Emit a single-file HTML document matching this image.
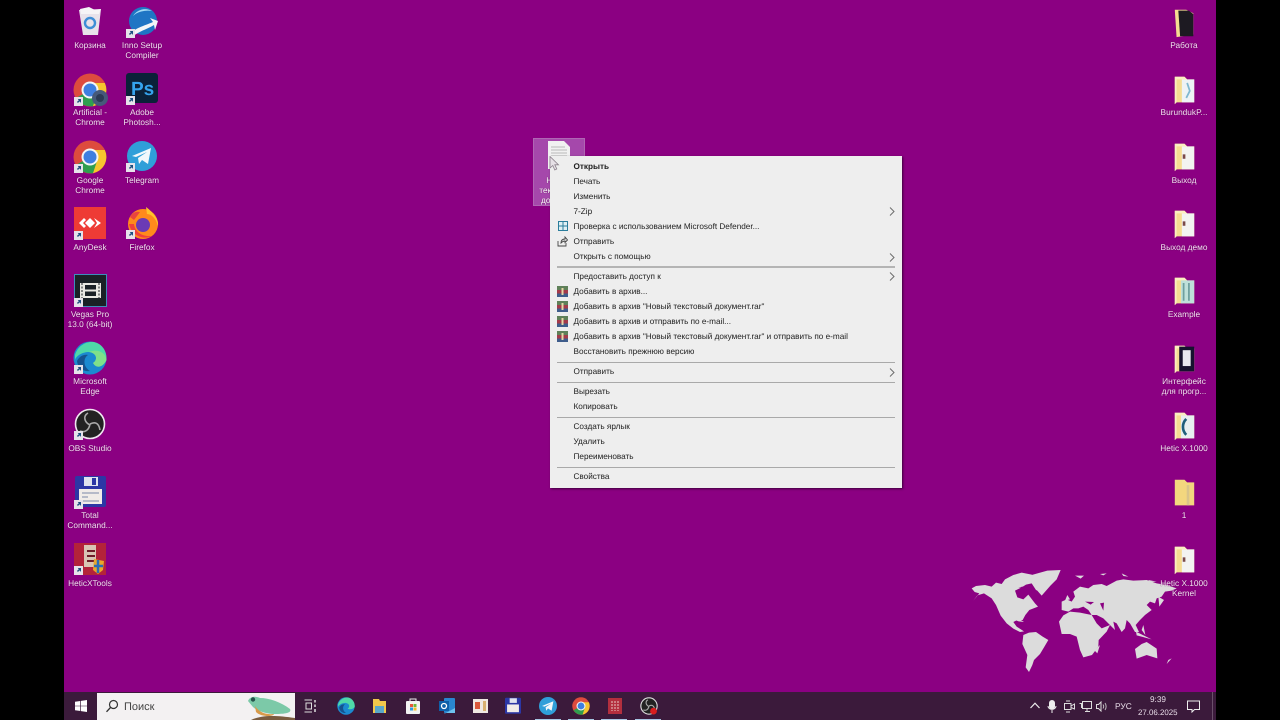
<!DOCTYPE html>
<html lang="ru"><head><meta charset="utf-8"><title>Desktop</title>
<style>
html{background:#000}
html,body{margin:0;padding:0;width:1280px;height:720px;overflow:hidden}
body{font-family:"Liberation Sans","Noto Sans CJK JP",sans-serif;position:relative;background:#000;filter:blur(.3px);text-rendering:geometricPrecision}
#desk{position:absolute;left:64px;top:0;width:1152px;height:720px;background:#8b0082}
.l{position:absolute;width:76px;text-align:center;color:#f6def4;font-size:8.3px;line-height:10px;transform:translateX(-38px);text-shadow:0 0 1px #50004a}
.ic{position:absolute;width:34px;height:34px}
.sc{position:absolute;width:9px;height:9px;background:#e6e2ea;overflow:hidden}
.sc:after{content:"";position:absolute;left:3px;top:2px;width:4px;height:4px;background:#1c4f80;clip-path:polygon(20% 0,100% 0,100% 100%,70% 60%,20% 100%,0 70%,45% 35%)}
#sel{position:absolute;left:533px;top:138px;width:52px;height:68px;background:#a548ab;box-sizing:border-box;border:1px solid #b066b4}
#menu{position:absolute;left:550px;top:156px;width:352px;height:332px;background:#eeeeee;box-shadow:1px 1px 2px rgba(30,0,30,.7);color:#222;font-size:8.2px}
.m{position:absolute;left:23.5px;line-height:12px;white-space:nowrap}
.s{position:absolute;left:7px;width:338px;height:1px;background:#a9a9a9}
.a{position:absolute;left:339px;width:6px;height:9px}
.w{position:absolute;left:7px;width:11px;height:11px}
#tb{position:absolute;left:64px;top:692px;width:1152px;height:28px;background:#3b1a3b}
#sb{position:absolute;left:97px;top:693px;width:198px;height:27px;background:#f3f1f2}
.t{position:absolute;color:#e9dde9;white-space:nowrap}
.u{position:absolute;top:718.5px;height:1.5px;background:#a8c8e4;width:26px}
</style></head><body>
<div id="desk"></div>
<svg width="0" height="0" style="position:absolute"><defs>
<symbol id="chrome" viewBox="0 0 34 34"><circle cx="17" cy="17" r="16.5" fill="#dd4b3e"/><path d="M3 25A16.5 16.5 0 0 0 20 33.200L26 22 17 17Z" fill="#2f9e4f"/><path d="M17 10H31.800A16.500 16.500 0 0 1 20 33.200L24 21Z" fill="#f6c52f"/><circle cx="17" cy="17" r="8.500" fill="#f5f5f5"/><circle cx="17" cy="17" r="6.500" fill="#3f7fe0"/></symbol>
<symbol id="folder" viewBox="0 0 24 34"><path d="M1 2H12L15 5H23V31H3L1 33Z" fill="#f6dc92"/><path d="M1 2V33L3 31V5H15L12 2Z" fill="#fbeec0"/></symbol>
<symbol id="rar" viewBox="0 0 11 11"><rect width="11" height="11" fill="#7a2c55"/><rect y="0" width="11" height="4" fill="#5f8059"/><rect y="4" width="11" height="3.500" fill="#a43a4a"/><rect y="7.500" width="11" height="3.500" fill="#3f5d8c"/><rect x="4.500" y="2" width="2" height="7" fill="#e7d7a8"/></symbol>
<symbol id="chev" viewBox="0 0 6 9"><path d="M1 .5 5 4.500 1 8.500" fill="none" stroke="#6d6d6d" stroke-width="1"/></symbol>
</defs></svg>

<!-- left column -->
<svg class="ic" style="left:75px;top:5px;width:30px;height:32px" viewBox="0 0 30 32"><path d="M4 5 26 4 23 30 8 30Z" fill="#e8e2ea"/><path d="M5 4 14 2 20 5 26 4 24 9 6 9Z" fill="#f6f4f6"/><circle cx="15" cy="18" r="5" fill="none" stroke="#3e8ed6" stroke-width="2.400"/></svg>
<div class="l" style="left:90px;top:40px">Корзина</div>
<svg class="ic" style="left:126px;top:6px" viewBox="0 0 34 34"><circle cx="17" cy="15" r="14" fill="#1f75c4"/><path d="M7 10A14 14 0 0 1 26 5 18 12 0 0 0 7 10Z" fill="#a6dcf5"/><path d="M2 30C8 22 18 20 27 16L24 12 32 15 29 24 28 19C20 24 10 26 6 32Z" fill="#f3f6f8"/></svg>
<div class="sc" style="left:126px;top:29px"></div>
<div class="l" style="left:142px;top:40px">Inno Setup<br>Compiler</div>

<svg class="ic" style="left:73px;top:73px"><use href="#chrome"/></svg>
<svg class="ic" style="left:91px;top:89px;width:18px;height:18px" viewBox="0 0 18 18"><circle cx="9" cy="9" r="8" fill="#46597a"/><circle cx="9" cy="9" r="4" fill="#2b3a55"/></svg>
<div class="sc" style="left:74px;top:97px"></div>
<div class="l" style="left:90px;top:107px">Artificial -<br>Chrome</div>
<svg class="ic" style="left:126px;top:73px;width:32px;height:30px" viewBox="0 0 32 30"><rect width="32" height="30" rx="3" fill="#0b2139"/><text x="5" y="22" font-family="Liberation Sans" font-weight="bold" font-size="19" fill="#35a4ee">Ps</text></svg>
<div class="sc" style="left:126px;top:96px"></div>
<div class="l" style="left:142px;top:107px">Adobe<br>Photosh...</div>

<svg class="ic" style="left:73px;top:140px"><use href="#chrome"/></svg>
<div class="sc" style="left:74px;top:164px"></div>
<div class="l" style="left:90px;top:175px">Google<br>Chrome</div>
<svg class="ic" style="left:127px;top:141px;width:30px;height:30px" viewBox="0 0 30 30"><circle cx="15" cy="15" r="15" fill="#2f9fd9"/><path d="M5 15 24 7 21 23 15 19 12 23 11 17 20 11 9 16Z" fill="#f2f8fb"/></svg>
<div class="sc" style="left:126px;top:163px"></div>
<div class="l" style="left:142px;top:175px">Telegram</div>

<svg class="ic" style="left:74px;top:207px;width:32px;height:32px" viewBox="0 0 32 32"><rect width="32" height="32" fill="#ee3b35"/><path d="M11 16 16 11 21 16 16 21Z" fill="#fff"/><path d="M5 16 10 11 12 13 9 16 12 19 10 21Z M20 11 27 16 20 21 23 16Z" fill="#fff"/></svg>
<div class="sc" style="left:74px;top:231px"></div>
<div class="l" style="left:90px;top:242px">AnyDesk</div>
<svg class="ic" style="left:126px;top:206px" viewBox="0 0 34 34"><circle cx="17" cy="18" r="15" fill="#ff8a1c"/><path d="M20 1C28 7 33 14 32 20 30 12 25 8 21 8Z" fill="#ffc32b"/><path d="M4 11C6 7 10 5 14 6L8 14Z" fill="#e9443e"/><circle cx="17" cy="19" r="7" fill="#6b3bb5"/><path d="M3 18C5 28 16 35 26 30 16 31 9 26 8 18Z" fill="#f0403c"/></svg>
<div class="sc" style="left:126px;top:230px"></div>
<div class="l" style="left:142px;top:242px">Firefox</div>

<svg class="ic" style="left:74px;top:274px;width:33px;height:33px" viewBox="0 0 33 33"><rect x=".5" y=".5" width="32" height="32" fill="#1a2126" stroke="#3d8dbc"/><rect x="6" y="9" width="21" height="15" fill="#e8e8e2"/><rect x="11" y="11" width="11" height="4.500" fill="#1a2126"/><rect x="11" y="17.500" width="11" height="4.500" fill="#1a2126"/><path d="M8 9v15M25 9v15" stroke="#1a2126" stroke-width="1" stroke-dasharray="2 1.500"/></svg>
<div class="sc" style="left:74px;top:298px"></div>
<div class="l" style="left:90px;top:309px">Vegas Pro<br>13.0 (64-bit)</div>

<svg class="ic" style="left:73px;top:341px" viewBox="0 0 34 34"><circle cx="17" cy="17" r="16.500" fill="#1b8ad0"/><path d="M2 14C5 4 14 0 21 1 30 3 34 11 33.500 19 30 24 23 24 20 22 25 19 24 12 16 11 9 11 3 15 2 19Z" fill="#4fd9a8"/><path d="M16 11C24 12 25 19 20 22 24 29 31 25 33.500 19 33 12 25 7 16 11Z" fill="#7fe08a"/><path d="M15 14C10 17 10 26 17 30 12 31 5 28 4 20 6 16 10 13 15 14Z" fill="#15538f"/></svg>
<div class="sc" style="left:74px;top:365px"></div>
<div class="l" style="left:90px;top:376px">Microsoft<br>Edge</div>

<svg class="ic" style="left:74px;top:408px;width:32px;height:32px" viewBox="0 0 32 32"><circle cx="16" cy="16" r="14.500" fill="#222" stroke="#f0e6f0" stroke-width="1.600"/><path d="M16 17C10 14 9 8 14 5M16 16C22 13 25 16 26 22M16 16C15 22 11 25 6 23" fill="none" stroke="#aaa" stroke-width="1.600"/></svg>
<div class="sc" style="left:74px;top:431px"></div>
<div class="l" style="left:90px;top:443px">OBS Studio</div>

<svg class="ic" style="left:75px;top:476px;width:31px;height:32px" viewBox="0 0 31 32"><rect width="31" height="31" rx="2" fill="#2c37a5"/><rect x="9" y="1" width="14" height="9" fill="#dfe3ee"/><rect x="17" y="2" width="4" height="7" fill="#2c37a5"/><rect x="4" y="13" width="23" height="15" fill="#f1ece8"/><path d="M7 17H24M7 21H13M7 25H24" stroke="#7b87a8"/></svg>
<div class="sc" style="left:74px;top:500px"></div>
<div class="l" style="left:90px;top:510px">Total<br>Command...</div>

<svg class="ic" style="left:74px;top:543px;width:32px;height:32px" viewBox="0 0 32 32"><rect width="32" height="32" fill="#b3233a"/><rect x="10" y="2" width="12" height="22" fill="#d9c6b4"/><path d="M13 8H21M13 13H21M13 18H21" stroke="#6e1d28" stroke-width="2"/><path d="M20 16 30 18 29 27 24 31 19 27Z" fill="#e9a82a"/><path d="M24 17V30M20 23H29" stroke="#2a6fb5" stroke-width="2.500"/></svg>
<div class="sc" style="left:74px;top:566px"></div>
<div class="l" style="left:90px;top:578px">HeticXTools</div>

<!-- right column -->
<svg class="ic" style="left:1173px;top:8px;width:23px;height:30px" viewBox="0 0 24 34"><path d="M1 2H14L22 6V30L3 33Z" fill="#f6dc92"/><path d="M5 3H17L22 7V32H7Z" fill="#1d1a22"/></svg>
<div class="l" style="left:1184px;top:40px">Работа</div>
<svg class="ic" style="left:1173px;top:75px;width:23px;height:30px" viewBox="0 0 24 34"><use href="#folder" width="24" height="34"/><rect x="9" y="5" width="14" height="26" fill="#eef3f5"/><path d="M15 9 18 18 14 26" stroke="#7fb8d0" stroke-width="2" fill="none"/></svg>
<div class="l" style="left:1184px;top:107px">BurundukP...</div>
<svg class="ic" style="left:1173px;top:142px;width:23px;height:30px" viewBox="0 0 24 34"><use href="#folder" width="24" height="34"/><rect x="9" y="5" width="14" height="26" fill="#f3f3f1"/><rect x="10" y="14" width="3" height="5" fill="#7a4a4a"/></svg>
<div class="l" style="left:1184px;top:175px">Выход</div>
<svg class="ic" style="left:1173px;top:209px;width:23px;height:30px" viewBox="0 0 24 34"><use href="#folder" width="24" height="34"/><rect x="9" y="5" width="14" height="26" fill="#f3f3f1"/><rect x="10" y="14" width="3" height="5" fill="#7a4a4a"/></svg>
<div class="l" style="left:1184px;top:242px">Выход демо</div>
<svg class="ic" style="left:1173px;top:276px;width:23px;height:30px" viewBox="0 0 24 34"><use href="#folder" width="24" height="34"/><rect x="8" y="5" width="15" height="26" fill="#bfe0da"/><path d="M11 8V28M17 8V28" stroke="#6f9f9f" stroke-width="2"/></svg>
<div class="l" style="left:1184px;top:309px">Example</div>
<svg class="ic" style="left:1173px;top:344px;width:23px;height:30px" viewBox="0 0 24 34"><use href="#folder" width="24" height="34"/><rect x="6" y="3" width="17" height="28" fill="#16122e"/><rect x="10" y="7" width="9" height="18" fill="#e8e8f0"/></svg>
<div class="l" style="left:1184px;top:376px">Интерфейс<br>для прогр...</div>
<svg class="ic" style="left:1173px;top:411px;width:23px;height:30px" viewBox="0 0 24 34"><use href="#folder" width="24" height="34"/><rect x="8" y="5" width="15" height="26" fill="#e8f0f0"/><path d="M14 9C9 14 9 22 14 27" stroke="#1f5f7a" stroke-width="3" fill="none"/></svg>
<div class="l" style="left:1184px;top:443px">Hetic X.1000</div>
<svg class="ic" style="left:1173px;top:478px;width:23px;height:30px" viewBox="0 0 24 34"><path d="M1 2H12L15 5H23V31H1Z" fill="#f3d77e"/><path d="M16 8V31" stroke="#d9c48a" stroke-width="3"/></svg>
<div class="l" style="left:1184px;top:510px">1</div>
<svg class="ic" style="left:1173px;top:545px;width:23px;height:30px" viewBox="0 0 24 34"><use href="#folder" width="24" height="34"/><rect x="9" y="5" width="14" height="26" fill="#f3f3f1"/><rect x="10" y="14" width="3" height="5" fill="#7a4a4a"/></svg>

<!-- world map -->
<svg style="position:absolute;left:960px;top:560px" width="260" height="120" viewBox="0 0 780 360">
<g fill="#dcdcdc">
<path d="M35 85 48 78 75 75 95 80 108 68 125 72 135 58 160 45 185 38 215 44 232 58 240 95 228 90 215 70 198 74 185 82 165 92 172 112 190 118 205 104 225 130 234 140 208 150 196 165 188 180 172 180 160 186 170 200 192 214 180 216 160 206 140 190 122 167 108 135 95 115 72 100 52 106 40 122 58 100 44 96Z"/>
<path d="M215 45 262 32 302 30 290 58 272 76 245 107 226 85Z"/>
<path d="M190 225 207 218 228 216 248 230 265 240 252 262 240 282 222 300 217 315 207 336 197 322 202 285 187 252Z"/>
<path d="M297 185 310 166 330 155 360 158 395 165 410 190 425 205 450 195 440 215 416 240 415 260 396 285 370 292 360 270 350 230 330 222 305 222Z"/>
<path d="M305 125 320 118 335 125 345 110 340 95 360 80 385 85 400 75 425 72 440 78 470 62 490 58 520 62 560 60 590 70 620 75 650 85 635 92 615 95 605 110 590 115 585 130 570 125 560 135 575 150 555 165 540 180 527 195 537 216 525 216 510 190 500 180 495 205 485 216 470 190 460 185 465 210 445 190 430 175 410 165 395 165 385 150 370 140 355 145 340 145 325 155 305 150Z"/>
<path d="M525 267 545 252 560 246 572 254 590 266 592 295 560 285 530 296Z"/>
<path d="M420 255 412 280 404 272Z"/>
<path d="M595 110 612 120 598 140Z"/>
<path d="M160 178H180L192 186 176 184Z"/>
<path d="M528 215 575 238 530 226Z"/>
<path d="M550 195 556 225 545 210Z"/>
<path d="M345 47H372L362 56Z"/>
<path d="M625 300 635 295 620 312Z"/>
<path d="M420 42 440 40 430 46Z"/>
<path d="M485 40 505 50 490 48Z"/>
<path d="M565 60 590 65 570 66Z"/>
<path d="M315 122 322 105 330 118Z"/>
</g>
<g fill="#8b0082"><path d="M375 125 402 126 392 134Z"/><path d="M420 130 432 128 430 152Z"/><path d="M175 82 200 78 196 84Z"/></g>
</svg>
<div class="l" style="left:1184px;top:578px">Hetic X.1000<br>Kernel</div>

<!-- selected file -->
<div id="sel"></div>
<svg class="ic" style="left:547px;top:140px;width:24px;height:30px" viewBox="0 0 24 30"><path d="M1 1H17L23 7V29H1Z" fill="#f1f1f1"/><path d="M4 7H18M4 10H20M4 13H20M4 16H20M4 19H20M4 22H20" stroke="#b9b9b9"/></svg>
<div class="l" style="left:559px;top:175px;color:#fff">Новый<br>текстовый<br>документ</div>

<!-- context menu -->
<div id="menu">
<div class="m" style="top:5px;font-weight:bold">Открыть</div>
<div class="m" style="top:20px">Печать</div>
<div class="m" style="top:35px">Изменить</div>
<div class="m" style="top:50px">7-Zip</div>
<svg class="a" style="top:51px"><use href="#chev"/></svg>
<svg class="w" style="top:65px;left:8px;width:10px;height:10px" viewBox="0 0 10 10"><rect x=".5" y=".5" width="9" height="9" fill="#dff0f4" stroke="#2b7d9c"/><path d="M5 1V9M1 5H9" stroke="#2b7d9c"/></svg>
<div class="m" style="top:65px">Проверка с использованием Microsoft Defender...</div>
<svg class="w" style="top:80px" viewBox="0 0 11 11"><path d="M1 5V10H9V7M4 7C4 4 6 3 8 3V1L10.500 4 8 6.500V5C6 5 5 6 4 7Z" fill="none" stroke="#444" stroke-width=".9"/></svg>
<div class="m" style="top:80px">Отправить</div>
<div class="m" style="top:95px">Открыть с помощью</div>
<svg class="a" style="top:97px"><use href="#chev"/></svg>
<div class="s" style="top:110px;height:2px;background:#b4b4b4"></div>
<div class="m" style="top:115px">Предоставить доступ к</div>
<svg class="a" style="top:116px"><use href="#chev"/></svg>
<svg class="w" style="top:130px"><use href="#rar"/></svg>
<div class="m" style="top:130px">Добавить в архив...</div>
<svg class="w" style="top:145px"><use href="#rar"/></svg>
<div class="m" style="top:145px">Добавить в архив "Новый текстовый документ.rar"</div>
<svg class="w" style="top:160px"><use href="#rar"/></svg>
<div class="m" style="top:160px">Добавить в архив и отправить по e-mail...</div>
<svg class="w" style="top:175px"><use href="#rar"/></svg>
<div class="m" style="top:175px">Добавить в архив "Новый текстовый документ.rar" и отправить по e-mail</div>
<div class="m" style="top:190px">Восстановить прежнюю версию</div>
<div class="s" style="top:206px"></div>
<div class="m" style="top:210px">Отправить</div>
<svg class="a" style="top:212px"><use href="#chev"/></svg>
<div class="s" style="top:226px"></div>
<div class="m" style="top:230px">Вырезать</div>
<div class="m" style="top:245px">Копировать</div>
<div class="s" style="top:261px"></div>
<div class="m" style="top:265px">Создать ярлык</div>
<div class="m" style="top:280px">Удалить</div>
<div class="m" style="top:295px">Переименовать</div>
<div class="s" style="top:311px"></div>
<div class="m" style="top:315px">Свойства</div>
</div>
<svg style="position:absolute;left:549px;top:156px" width="11" height="15" viewBox="0 0 11 15"><path d="M1 .5V12L3.800 9.500 5.800 14 7.800 13 5.800 8.800H9.500Z" fill="#e6e0e6" stroke="#8a7f8a" stroke-width=".8"/></svg>

<!-- taskbar -->
<div id="tb"></div>
<svg style="position:absolute;left:75px;top:700px" width="12" height="12" viewBox="0 0 12 12"><path d="M0 1.800 5.300 1V5.700H0ZM6 .9 12 0V5.700H6ZM0 6.300H5.300V11L0 10.200ZM6 6.300H12V12L6 11.100Z" fill="#fff"/></svg>
<div id="sb"></div>
<svg style="position:absolute;left:105px;top:699px" width="14" height="14" viewBox="0 0 14 14"><circle cx="8.500" cy="5.500" r="4" fill="none" stroke="#333" stroke-width="1.200"/><path d="M5.500 8.500 1.500 12.800" stroke="#333" stroke-width="1.300"/></svg>
<div class="t" style="left:124px;top:700.500px;font-size:11px;color:#444">Поиск</div>
<svg style="position:absolute;left:245px;top:694px" width="50" height="26" viewBox="0 0 50 26"><path d="M3 7C5 2 11 2 15 4 24 4 36 8 45 15 47 19 40 20 30 20 22 20 12 17 8 13Z" fill="#7cc9a8"/><circle cx="8" cy="5.500" r="2.200" fill="#25524a"/><path d="M10 12C14 18 20 21 29 20 28 23 16 23 11 18Z" fill="#d89a4a"/><path d="M6 26C16 21 30 21 50 24V26Z" fill="#7a5c40"/></svg>
<svg style="position:absolute;left:304px;top:699px" width="13" height="14" viewBox="0 0 13 14"><path d="M.5 1H8M.5 13H8M2 4H7.500V10H2Z" fill="none" stroke="#ddd"/><path d="M11 1V3.500M11 5.500V8M11 10V13" stroke="#ddd" stroke-width="1.500"/></svg>
<svg style="position:absolute;left:337px;top:697px" width="18" height="18" viewBox="0 0 34 34"><circle cx="17" cy="17" r="16.500" fill="#1b8ad0"/><path d="M2 14C5 4 14 0 21 1 30 3 34 11 33.500 19 30 24 23 24 20 22 25 19 24 12 16 11 9 11 3 15 2 19Z" fill="#4fd9a8"/><path d="M15 14C10 17 10 26 17 30 12 31 5 28 4 20 6 16 10 13 15 14Z" fill="#15538f"/></svg>
<svg style="position:absolute;left:372px;top:698px" width="15" height="16" viewBox="0 0 15 16"><path d="M1 1H7L8 3H14V15H1Z" fill="#f2c84b"/><rect x="3" y="8" width="9" height="7" fill="#5aa7c9"/></svg>
<svg style="position:absolute;left:405px;top:697px" width="16" height="18" viewBox="0 0 16 18"><rect x="1" y="4" width="14" height="13" rx="1" fill="#f2f2f2"/><path d="M5 5V2H11V5" fill="none" stroke="#eee"/><rect x="5" y="7" width="3" height="3" fill="#e8543a"/><rect x="8.500" y="7" width="3" height="3" fill="#6fb83b"/><rect x="5" y="10.500" width="3" height="3" fill="#2c9ae0"/><rect x="8.500" y="10.500" width="3" height="3" fill="#f2bc2c"/></svg>
<svg style="position:absolute;left:438px;top:697px" width="18" height="18" viewBox="0 0 18 18"><rect x="6" y="1" width="11" height="15" rx="1" fill="#2a86d0"/><rect x="1" y="4" width="10" height="10" fill="#0f5fa8"/><circle cx="6" cy="9" r="2.500" fill="none" stroke="#fff" stroke-width="1.300"/><path d="M6 17 17 11V16H7Z" fill="#6ec2ee"/></svg>
<svg style="position:absolute;left:472px;top:698px" width="17" height="16" viewBox="0 0 17 16"><rect x="1" y="1" width="15" height="14" fill="#efe8e2"/><rect x="3" y="4" width="5" height="7" fill="#d9583b"/><rect x="11" y="3" width="3" height="10" fill="#d8b070"/></svg>
<svg style="position:absolute;left:505px;top:697px" width="16" height="18" viewBox="0 0 31 32"><rect width="31" height="31" rx="2" fill="#2c37a5"/><rect x="9" y="1" width="14" height="9" fill="#dfe3ee"/><rect x="4" y="13" width="23" height="15" fill="#f1ece8"/></svg>
<svg style="position:absolute;left:539px;top:697px" width="18" height="18" viewBox="0 0 30 30"><circle cx="15" cy="15" r="15" fill="#2f9fd9"/><path d="M5 15 24 7 21 23 15 19 12 23 11 17 20 11 9 16Z" fill="#f2f8fb"/></svg>
<svg style="position:absolute;left:572px;top:697px" width="18" height="18"><use href="#chrome"/></svg>
<svg style="position:absolute;left:607px;top:697px" width="16" height="18" viewBox="0 0 16 18"><rect x="1" y="1" width="14" height="16" fill="#b32f3e"/><path d="M5 4V14M8 4V14M11 4V14" stroke="#e7c9c2" stroke-dasharray="2 1"/></svg>
<svg style="position:absolute;left:640px;top:697px" width="18" height="18" viewBox="0 0 32 32"><circle cx="16" cy="16" r="14.500" fill="#222" stroke="#ddd" stroke-width="2"/><path d="M16 17C10 14 9 8 14 5M16 16C22 13 25 16 26 22M16 16C15 22 11 25 6 23" fill="none" stroke="#aaa" stroke-width="2"/><circle cx="24" cy="25" r="6" fill="#d81e1e"/></svg>
<div class="u" style="left:535px"></div><div class="u" style="left:568px"></div><div class="u" style="left:601px"></div><div class="u" style="left:635px"></div>

<!-- tray -->
<svg style="position:absolute;left:1030px;top:702px" width="10" height="7" viewBox="0 0 10 7"><path d="M.5 6 5 1.200 9.500 6" fill="none" stroke="#eee" stroke-width="1.200"/></svg>
<svg style="position:absolute;left:1047px;top:700px" width="10" height="13" viewBox="0 0 10 13"><rect x="2" y="0" width="6" height="9.500" rx="3" fill="#eee"/><path d="M1 6C1 10.500 9 10.500 9 6M5 10V13" fill="none" stroke="#eee"/></svg>
<svg style="position:absolute;left:1064px;top:700px" width="11" height="13" viewBox="0 0 11 13"><rect x=".5" y="3.500" width="6.500" height="6" fill="none" stroke="#ddd"/><path d="M7 6 10.500 4V9L7 7.500M2 1H6M2 12H6" fill="none" stroke="#ddd"/></svg>
<svg style="position:absolute;left:1079px;top:701px" width="13" height="11" viewBox="0 0 13 11"><rect x="3.500" y=".5" width="9" height="7" fill="none" stroke="#ddd"/><path d="M.5 2.500H2.500V7M6 10.500H11M8 8V10" fill="none" stroke="#ddd"/></svg>
<svg style="position:absolute;left:1096px;top:701px" width="11" height="11" viewBox="0 0 11 11"><path d="M.5 3.500H2.500L5 1V10L2.500 7.500H.5Z" fill="none" stroke="#ddd"/><path d="M7 3.500C8 5 8 6 7 7.500M9 2C10.500 4 10.500 7 9 9" fill="none" stroke="#bbb"/></svg>
<div class="t" style="left:1115px;top:701px;font-size:8.400px">РУС</div>
<div class="t" style="left:1150px;top:695px;font-size:8.200px">9:39</div>
<div class="t" style="left:1138px;top:708px;font-size:7.900px">27.06.2025</div>
<svg style="position:absolute;left:1187px;top:700px" width="13" height="13" viewBox="0 0 13 13"><path d="M.5 1H12.500V9.500H7.500L5 12V9.500H.5Z" fill="none" stroke="#eee"/></svg>
<div style="position:absolute;left:1212px;top:692px;width:1px;height:28px;background:#6a506a"></div>
</body></html>
